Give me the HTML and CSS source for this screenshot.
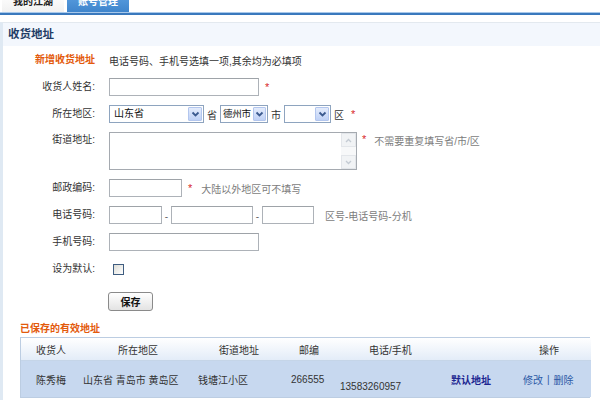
FILE: index.html
```html
<!DOCTYPE html>
<html lang="zh-CN">
<head>
<meta charset="utf-8">
<link rel="stylesheet" href="styles.css">
</head>
<body>
<div class="tabs">
  <div class="tab">我的江湖</div>
  <div class="tab active">账号管理</div>
</div>
<div class="tabline"></div>
<div class="panel">
  <div class="panel-head">收货地址</div>
  <div class="form">
    <div class="label orange">新增收货地址</div>
    <div class="control">电话号码、手机号选填一项,其余均为必填项</div>

    <div class="label">收货人姓名:</div>
    <div class="control gap6"><span class="input w150"></span><span class="star">*</span></div>

    <div class="label">所在地区:</div>
    <div class="control gap3">
      <span class="select w95"><span class="sel-text">山东省</span><span class="sel-arrow"><svg width="9" height="7" viewBox="0 0 9 7"><path d="M1.5 1.5 L4.5 4.5 L7.5 1.5" fill="none" stroke="#3b5a8f" stroke-width="1.8"/></svg></span></span>
      <span>省</span>
      <span class="select w48"><span class="sel-text tight">德州市</span><span class="sel-arrow"><svg width="9" height="7" viewBox="0 0 9 7"><path d="M1.5 1.5 L4.5 4.5 L7.5 1.5" fill="none" stroke="#3b5a8f" stroke-width="1.8"/></svg></span></span>
      <span>市</span>
      <span class="select w47"><span class="sel-text"></span><span class="sel-arrow"><svg width="9" height="7" viewBox="0 0 9 7"><path d="M1.5 1.5 L4.5 4.5 L7.5 1.5" fill="none" stroke="#3b5a8f" stroke-width="1.8"/></svg></span></span>
      <span>区</span>
      <span class="star ml4">*</span>
    </div>

    <div class="label top">街道地址:</div>
    <div class="control top">
      <span class="textarea">
        <span class="ta-body"></span>
        <span class="scrollbar">
          <span class="sb-btn"><svg width="7" height="5" viewBox="0 0 7 5"><path d="M1 4 L3.5 1.5 L6 4" fill="none" stroke="#c4cbd3" stroke-width="1.3"/></svg></span>
          <span class="sb-track"></span>
          <span class="sb-btn"><svg width="7" height="5" viewBox="0 0 7 5"><path d="M1 1 L3.5 3.5 L6 1" fill="none" stroke="#c4cbd3" stroke-width="1.3"/></svg></span>
        </span>
      </span>
      <span class="star sm ml5">*</span>
      <span class="hint ml8 pt1">不需要重复填写省/市/区</span>
    </div>

    <div class="label">邮政编码:</div>
    <div class="control"><span class="input w73"></span><span class="star ml6">*</span><span class="hint ml9">大陆以外地区可不填写</span></div>

    <div class="label">电话号码:</div>
    <div class="control">
      <span class="input w53"></span><span class="dash">-</span><span class="input w82"></span><span class="dash">-</span><span class="input w52"></span><span class="hint ml11">区号-电话号码-分机</span>
    </div>

    <div class="label">手机号码:</div>
    <div class="control"><span class="input w150"></span></div>

    <div class="label">设为默认:</div>
    <div class="control"><span class="checkbox"></span></div>

    <div class="label"></div>
    <div class="control btnrow"><span class="button">保存</span></div>
  </div>

  <div class="saved">
    <div class="saved-title">已保存的有效地址</div>
    <div class="table">
      <div class="th" style="padding-left:15px">收货人</div>
      <div class="th" style="padding-left:37px">所在地区</div>
      <div class="th" style="padding-left:23px">街道地址</div>
      <div class="th" style="padding-left:13px">邮编</div>
      <div class="th" style="padding-left:33px">电话/手机</div>
      <div class="th"></div>
      <div class="th" style="padding-left:28px">操作</div>

      <div class="td" style="padding-left:15px">陈秀梅</div>
      <div class="td" style="padding-left:2px">山东省 青岛市 黄岛区</div>
      <div class="td" style="padding-left:2px">钱塘江小区</div>
      <div class="td" style="padding-left:5px">266555</div>
      <div class="td low" style="padding-left:4px">13583260957</div>
      <div class="td" style="padding-left:10px"><span class="default-link">默认地址</span></div>
      <div class="td" style="padding-left:12px"><span class="link">修改</span><span class="sep">|</span><span class="link">删除</span></div>
    </div>
  </div>
</div>
</body>
</html>
```

FILE: styles.css
```css
* { box-sizing: border-box; }
html, body { margin: 0; padding: 0; background: #fff; }
body {
  font-family: "Liberation Sans", "Noto Sans CJK SC", sans-serif;
  font-size: 10px;
  color: #333;
  width: 600px;
  height: 400px;
  overflow: hidden;
}

.tabs {
  display: flex;
  height: 18px;
  margin-top: -6px;
  padding-left: 2px;
}
.tab {
  width: 62px;
  height: 18px;
  line-height: 15px;
  text-align: center;
  font-weight: bold;
  font-size: 10px;
  color: #222;
  background: linear-gradient(#ffffff, #f1f1f1);
}
.tab.active {
  margin-left: 3px;
  background: linear-gradient(#5a9ee0, #3f85cc);
  color: #fff;
}
.tabline {
  height: 3px;
  border-top: 1px solid #a8c8ea;
  background: #3a79bd;
}

.panel {
  margin-top: 7px;
  border-left: 3px solid #dfe9f3;
  border-top: 1px solid #e3e9ef;
  min-height: 380px;
}
.panel-head {
  height: 23px;
  line-height: 23px;
  padding-left: 5px;
  background: #f3f7fd;
  font-size: 11.5px;
  font-weight: bold;
  color: #1f3d66;
}

.form {
  display: grid;
  grid-template-columns: 92px 1fr;
  column-gap: 14px;
  row-gap: 9px;
  padding-top: 5px;
}
.label {
  height: 18px;
  line-height: 18px;
  text-align: right;
  white-space: nowrap;
}
.label.top { line-height: 14px; padding-top: 1px; }
.label.orange { color: #e35a0c; font-weight: bold; }
.control {
  display: flex;
  align-items: center;
  min-height: 18px;
  white-space: nowrap;
}
.control.top { align-items: flex-start; }
.gap6 { gap: 6px; }
.gap3 { gap: 3px; }
.ml4 { margin-left: 4px; }
.ml5 { margin-left: 5px; }
.ml6 { margin-left: 6px; }
.ml8 { margin-left: 8px; }
.ml9 { margin-left: 9px; }
.ml11 { margin-left: 11px; }
.pt1 { padding-top: 1px; }

.input {
  display: inline-block;
  height: 18px;
  border: 1px solid #adb2b8;
  border-top-color: #9ea3a8;
  background: #fff;
}
.w150 { width: 150px; }
.w73 { width: 73px; }
.w53 { width: 53px; }
.w82 { width: 82px; }
.w52 { width: 52px; }
.w95 { width: 95px; }
.w48 { width: 48px; }
.w47 { width: 47px; }

.star { color: #d8282c; font-size: 11px; line-height: 10px; }
.star.sm { padding-top: 2px; }
.hint { color: #7c7c7c; }
.dash { width: 9px; text-align: center; color: #666; padding-top: 3px; }

.select {
  display: inline-flex;
  height: 18px;
  border: 1px solid #8ea4bf;
  background: #fff;
  padding: 1px;
}
.sel-text {
  flex: 1;
  padding-left: 3px;
  line-height: 14px;
  color: #111;
  overflow: hidden;
}
.sel-text.tight { padding-left: 1px; overflow: visible; font-size: 9.5px; letter-spacing: -0.2px; }
.sel-arrow {
  width: 14px;
  flex: none;
  display: flex;
  align-items: center;
  justify-content: center;
  background: linear-gradient(#e4ecfc, #bfd1f6);
  border: 1px solid #b3c6ee;
  border-radius: 1px;
}
.w48 .sel-arrow { width: 13px; }

.textarea {
  display: flex;
  width: 248px;
  height: 38px;
  border: 1px solid #a5aab0;
  background: #fff;
}
.ta-body { flex: 1; }
.scrollbar {
  width: 15px;
  display: flex;
  flex-direction: column;
  background: #f7f8f9;
}
.sb-btn {
  height: 14px;
  display: flex;
  align-items: center;
  justify-content: center;
  border: 1px solid #e3e6ea;
  background: #f1f3f5;
}
.sb-track { flex: 1; }

.checkbox {
  display: inline-block;
  width: 11px;
  height: 11px;
  margin-left: 4px;
  border: 1px solid #3f5d80;
  background: linear-gradient(135deg, #dcdcd6, #ffffff);
}

.btnrow { margin-top: 5px; }
.button {
  display: inline-flex;
  align-items: center;
  justify-content: center;
  width: 45px;
  height: 19px;
  margin-left: -1px;
  border: 1px solid #8a8a8a;
  border-radius: 3px;
  background: linear-gradient(#ffffff, #e3e3e3);
  font-weight: bold;
  color: #111;
}

.saved {
  padding-left: 17px;
  margin-top: 11px;
}
.saved-title {
  color: #e35a0c;
  font-weight: bold;
  height: 14px;
  line-height: 14px;
  margin-bottom: 1px;
}
.table {
  display: grid;
  width: 570px;
  grid-template-columns: 60px 115px 90px 50px 105px 70px 80px;
  grid-template-rows: 23px 36px;
  border: 1px solid #bccde2;
}
.th {
  background: linear-gradient(#ffffff, #e3ecf8);
  border-bottom: 1px solid #c5d5e8;
  display: flex;
  align-items: center;
  color: #333;
}
.td {
  background: #c7d8ef;
  display: flex;
  align-items: center;
  color: #333;
  white-space: nowrap;
}
.td.low { align-items: flex-end; padding-bottom: 5px; }
.default-link { color: #1c2591; font-weight: bold; }
.link { color: #2d5aa6; }
.sep { color: #2d5aa6; margin: 0 4px; }
```
